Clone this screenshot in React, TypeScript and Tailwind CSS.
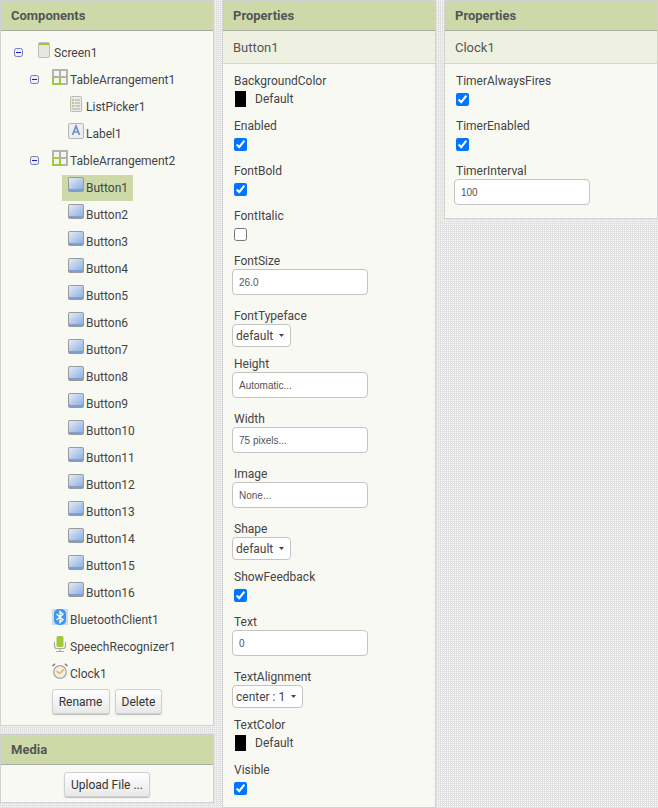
import type { ReactNode } from 'react';

const dots = "bg-[conic-gradient(#fafafa_25%,#e2e2e2_0)] bg-[length:2px_2px]";

function ToggleIcon() {
  return (
    <svg width="9" height="9" viewBox="0 0 9 9" className="shrink-0">
      <rect x="0.5" y="0.5" width="8" height="8" rx="2" fill="#eef0f8" stroke="#6f7db5" />
      <path d="M2 4.5h5" stroke="#1c1cb8" strokeWidth="1" />
    </svg>
  );
}

function ScreenIcon() {
  return (
    <svg width="16" height="16" viewBox="0 0 16 16" className="shrink-0">
      <rect x="2.5" y="0.5" width="11" height="15" rx="1.5" fill="#e6e6e2" stroke="#bdbdbd" />
      <rect x="3" y="1" width="10" height="2" fill="#a4c639" />
    </svg>
  );
}

function TableIcon() {
  return (
    <svg width="16" height="16" viewBox="0 0 16 16" className="shrink-0">
      <rect x="0" y="0" width="16" height="16" rx="1" fill="#b4b4ae" />
      <path d="M0 8h8v1h1v7H1a1 1 0 0 1-1-1z" fill="#a4c639" />
      <rect x="2" y="2" width="5" height="5" fill="#f4f4f0" />
      <rect x="9" y="2" width="5" height="5" fill="#f4f4f0" />
      <rect x="2" y="9" width="5" height="5" fill="#f4f4f0" />
      <rect x="9" y="9" width="5" height="5" fill="#f4f4f0" />
    </svg>
  );
}

function ListIcon() {
  return (
    <svg width="16" height="16" viewBox="0 0 16 16" className="shrink-0">
      <rect x="2.5" y="0.5" width="11" height="15" rx="1" fill="#ebebe6" stroke="#bcbcb8" />
      <path d="M4 4h2M4 7h2M4 10h2" stroke="#a4c639" strokeWidth="1.5" />
      <path d="M7 4h5M7 7h5M7 10h5M4 13h8" stroke="#a8a8a4" strokeWidth="1" />
    </svg>
  );
}

function LabelIcon() {
  return (
    <svg width="16" height="16" viewBox="0 0 16 16" className="shrink-0">
      <rect x="0.5" y="0.5" width="15" height="15" rx="1.5" fill="#eeeeee" stroke="#b5b5b5" />
      <path d="M4.5 12 8 3l3.5 9M5.8 9h4.4" fill="none" stroke="#6d8fd0" strokeWidth="1.7" />
    </svg>
  );
}

function ButtonIcon({ id }: { id: number }) {
  return (
    <svg width="16" height="16" viewBox="0 0 16 16" className="shrink-0">
      <defs>
        <linearGradient id={`btn${id}`} x1="0" y1="0" x2="1" y2="1">
          <stop offset="0" stopColor="#e4ecf8" />
          <stop offset="1" stopColor="#8fb0e0" />
        </linearGradient>
      </defs>
      <rect x="0" y="0" width="16" height="15" rx="2" fill="#9a9a9a" />
      <rect x="1" y="1" width="14" height="11" rx="1" fill={`url(#btn${id})`} />
      <rect x="1" y="12" width="14" height="2" fill="#7f9fd0" />
    </svg>
  );
}

function BluetoothIcon() {
  return (
    <svg width="16" height="16" viewBox="0 0 16 16" className="shrink-0">
      <rect x="0" y="0" width="16" height="16" fill="#cfd8e6" />
      <rect x="2" y="0" width="12" height="16" rx="5" fill="#3b97f0" />
      <path d="M4.5 5 11 10.8 8 13.5V2.5L11 5.2 4.5 11" fill="none" stroke="#fff" strokeWidth="1.3" />
    </svg>
  );
}

function SpeechIcon() {
  return (
    <svg width="16" height="16" viewBox="0 0 16 16" className="shrink-0">
      <rect x="4.5" y="0" width="7" height="11" rx="1.5" fill="#a4c639" />
      <path d="M2.5 6v4a2.5 2.5 0 0 0 2.5 2.5h6a2.5 2.5 0 0 0 2.5-2.5V6" fill="none" stroke="#a9a9a9" strokeWidth="1.2" />
      <path d="M8 12.5V15M4 15.5h8" stroke="#a9a9a9" strokeWidth="1.2" />
    </svg>
  );
}

function ClockIcon() {
  return (
    <svg width="16" height="16" viewBox="0 0 16 16" className="shrink-0">
      <circle cx="8" cy="9" r="6.3" fill="#f0efe8" stroke="#a8a8a0" strokeWidth="1.3" />
      <path d="M4.5 8 7.5 10.5 12 6.5" fill="none" stroke="#eeb04e" strokeWidth="1.4" />
      <path d="M0.5 3 3 0.8M15.5 3 13 0.8" stroke="#777" strokeWidth="1.5" />
    </svg>
  );
}

function TreeRow({ depth, icon, label, open, selected }: { depth: 0 | 1 | 2; icon: ReactNode; label: string; open?: boolean; selected?: boolean }) {
  const start = depth === 0 ? 'pl-[13px]' : depth === 1 ? 'pl-[29px]' : 'pl-[61px]';
  return (
    <div className={`flex h-[27px] items-center ${start}`}>
      {open && <ToggleIcon />}
      <div className={`flex h-[26px] items-center pr-[5px] ${open ? 'ml-[13px]' : depth === 1 ? 'ml-[22px]' : 'pl-[6px]'} ${selected ? 'bg-[#cdd9a8]' : ''}`}>
        <span className="-mt-[6px]">{icon}</span>
        <span className="ml-[2px] pt-[1px]">{label}</span>
      </div>
    </div>
  );
}

function GwtButton({ children }: { children: ReactNode }) {
  return (
    <button className="h-[25px] rounded-[3px] border border-[#d0d0d0] bg-gradient-to-b from-[#ffffff] to-[#e8e8e8] px-[6px] text-[12px] text-[#333] shadow-[0_1px_1px_#bbb]">
      {children}
    </button>
  );
}

function PanelHeader({ title }: { title: string }) {
  return (
    <div className="flex h-[30px] items-center border-b border-[#aaaaa0] bg-[#cdd9a8] pl-[10px] text-[13px] font-bold text-[#555]">
      {title}
    </div>
  );
}

function SubHeader({ title }: { title: string }) {
  return (
    <div className="flex h-[33px] items-center border-b border-[#d4d4d0] bg-[#eef1e2] pl-[10px] pt-[1px] text-[13px] text-[#555]">
      {title}
    </div>
  );
}

function Label({ text }: { text: string }) {
  return <div className="h-[18px] pl-[11px] leading-[18px]">{text}</div>;
}

function ColorProp({ name }: { name: string }) {
  return (
    <div className="h-[45px]">
      <Label text={name} />
      <div className="flex items-center pl-[12px]">
        <div className="h-[16px] w-[11px] bg-black" />
        <span className="ml-[9px]">Default</span>
      </div>
    </div>
  );
}

function CheckProp({ name, checked = true }: { name: string; checked?: boolean }) {
  return (
    <div className="h-[45px]">
      <Label text={name} />
      <div className="flex pl-[11px] pt-[3px]">
        <input type="checkbox" defaultChecked={checked} className="h-[13px] w-[13px]" />
      </div>
    </div>
  );
}

function TextProp({ name, value }: { name: string; value: string }) {
  return (
    <div className="h-[55px]">
      <Label text={name} />
      <input
        readOnly
        value={value}
        className="-mt-[1px] ml-[9px] block h-[26px] w-[136px] rounded-[4px] border border-[#c4c4c4] bg-white px-[6px] font-['Liberation_Sans',sans-serif] text-[10px] text-[#555]"
      />
    </div>
  );
}

function SelectProp({ name, value, width }: { name: string; value: string; width: string }) {
  return (
    <div className="h-[48px]">
      <Label text={name} />
      <div className={`relative -mt-[1px] ml-[9px] ${width}`}>
        <select
          defaultValue={value}
          className="block h-[23px] w-full appearance-none rounded-[4px] border border-[#c4c4c4] bg-white pl-[3px] text-[12px] text-[#444]"
        >
          <option>{value}</option>
        </select>
        <svg width="5" height="3" viewBox="0 0 5 3" className="absolute right-[7px] top-[10px]">
          <path d="M0 0h5L2.5 3z" fill="#444" />
        </svg>
      </div>
    </div>
  );
}

const buttons = Array.from({ length: 16 }, (_, i) => i + 1);

export default function App() {
  return (
    <div className={`flex h-[808px] w-[658px] items-start gap-2 overflow-hidden font-['Roboto',sans-serif] text-[12px] text-[#444] ${dots}`}>
      <div className="flex w-[214px] flex-col gap-[8px]">
        <div className="h-[726px] border border-[#d2d2d2] bg-[#f9f9f4]">
          <PanelHeader title="Components" />
          <div className="pt-[8px]">
            <TreeRow depth={0} open icon={<ScreenIcon />} label="Screen1" />
            <TreeRow depth={1} open icon={<TableIcon />} label="TableArrangement1" />
            <TreeRow depth={2} icon={<ListIcon />} label="ListPicker1" />
            <TreeRow depth={2} icon={<LabelIcon />} label="Label1" />
            <TreeRow depth={1} open icon={<TableIcon />} label="TableArrangement2" />
            {buttons.map((n) => (
              <TreeRow key={n} depth={2} selected={n === 1} icon={<ButtonIcon id={n} />} label={`Button${n}`} />
            ))}
            <TreeRow depth={1} icon={<BluetoothIcon />} label="BluetoothClient1" />
            <TreeRow depth={1} icon={<SpeechIcon />} label="SpeechRecognizer1" />
            <TreeRow depth={1} icon={<ClockIcon />} label="Clock1" />
          </div>
          <div className="flex justify-center gap-[5px] pt-[2px]">
            <GwtButton>Rename</GwtButton>
            <GwtButton>Delete</GwtButton>
          </div>
        </div>
        <div className="h-[69px] border border-[#d2d2d2] bg-[#f9f9f4]">
          <PanelHeader title="Media" />
          <div className="flex justify-center pt-[7px]">
            <GwtButton>Upload File ...</GwtButton>
          </div>
        </div>
      </div>

      <div className="h-[808px] w-[214px] border border-[#d2d2d2] bg-[#f9f9f4]">
        <PanelHeader title="Properties" />
        <SubHeader title="Button1" />
        <div className="pt-2">
          <ColorProp name="BackgroundColor" />
          <CheckProp name="Enabled" />
          <CheckProp name="FontBold" />
          <CheckProp name="FontItalic" checked={false} />
          <TextProp name="FontSize" value="26.0" />
          <SelectProp name="FontTypeface" value="default" width="w-[59px]" />
          <TextProp name="Height" value="Automatic..." />
          <TextProp name="Width" value="75 pixels..." />
          <TextProp name="Image" value="None..." />
          <SelectProp name="Shape" value="default" width="w-[59px]" />
          <CheckProp name="ShowFeedback" />
          <TextProp name="Text" value="0" />
          <SelectProp name="TextAlignment" value="center : 1" width="w-[71px]" />
          <ColorProp name="TextColor" />
          <CheckProp name="Visible" />
        </div>
      </div>

      <div className="h-[219px] w-[214px] border border-[#d2d2d2] bg-[#f9f9f4]">
        <PanelHeader title="Properties" />
        <SubHeader title="Clock1" />
        <div className="pt-2">
          <CheckProp name="TimerAlwaysFires" />
          <CheckProp name="TimerEnabled" />
          <TextProp name="TimerInterval" value="100" />
        </div>
      </div>
    </div>
  );
}
